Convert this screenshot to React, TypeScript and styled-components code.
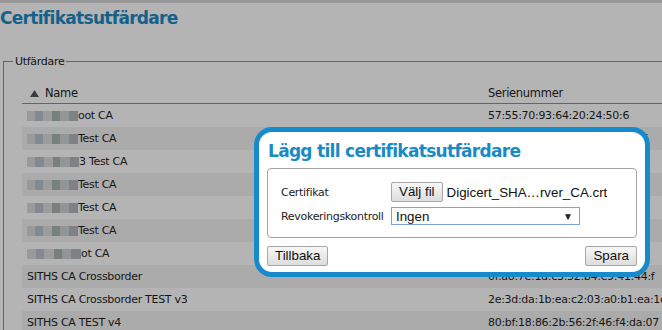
import styled, { createGlobalStyle } from "styled-components";

const GlobalStyle = createGlobalStyle`
  html, body {
    margin: 0;
    padding: 0;
    background: #fff;
  }
  body {
    font-family: "DejaVu Sans", "Liberation Sans", sans-serif;
    color: #1f1f1f;
  }
`;

const tahoma = `"DejaVu Sans", "Liberation Sans", sans-serif`;
const arial = `"Liberation Sans", Arial, sans-serif`;

const S = {
  Page: styled.div`
    position: relative;
    width: 662px;
    height: 330px;
    overflow: hidden;
    background: #fff;
  `,
  TopBar: styled.div`
    height: 3px;
    background: #d8d8d8;
  `,
  Title: styled.h1`
    margin: 0;
    height: 30px;
    line-height: 30px;
    font-family: ${tahoma};
    font-size: 17px;
    font-weight: bold;
    letter-spacing: -0.7px;
    color: #1d8ac5;
  `,
  Fieldset: styled.fieldset`
    margin: 22px -30px 0 3px;
    padding: 0 0 0 18px;
    border: 1px solid #8e8e8e;
    border-right: none;
    border-bottom: none;
    min-width: 0;
  `,
  Legend: styled.legend`
    margin-left: -9px;
    padding: 0 2px;
    font-family: ${tahoma};
    font-size: 11px;
    letter-spacing: -0.3px;
    line-height: 13px;
    color: #222;
  `,
  Table: styled.div`
    margin-top: 14px;
    font-family: ${tahoma};
    font-size: 11px;
    letter-spacing: -0.3px;
    color: #1f1f1f;
  `,
  HeadRow: styled.div`
    display: grid;
    grid-template-columns: 466px 1fr;
    height: 22px;
    align-items: end;
    padding-bottom: 3px;
    box-sizing: border-box;
    border-bottom: 1px solid #8e8e8e;
    font-size: 11.5px;
    line-height: 14px;
  `,
  HeadName: styled.div`
    display: flex;
    align-items: center;
    gap: 6px;
    padding-left: 8px;
  `,
  Row: styled.div<{ $alt: boolean }>`
    display: grid;
    grid-template-columns: 466px 1fr;
    height: 23px;
    align-items: center;
    background: ${(p) => (p.$alt ? "#f3f3f3" : "#fff")};
    white-space: nowrap;
  `,
  NameCell: styled.div`
    display: flex;
    align-items: center;
    padding-left: 5px;
  `,
  Blur: styled.span<{ $w: number }>`
    display: inline-block;
    width: ${(p) => p.$w}px;
    height: 10px;
    background: linear-gradient(
      90deg,
      #d9dbde 0 16%,
      #bac2cc 16% 32%,
      #dedede 32% 50%,
      #abb6b0 50% 64%,
      #cfd3d8 64% 82%,
      #b5b9bd 82%
    );
    filter: blur(0.7px);
  `,
  Overlay: styled.div`
    position: absolute;
    inset: 0;
    background: rgba(0, 0, 0, 0.294);
  `,
  Dialog: styled.div`
    position: absolute;
    left: 254px;
    top: 127px;
    width: 396px;
    height: 150px;
    box-sizing: border-box;
    border: 5px solid #168bcb;
    border-radius: 18px;
    background: #fff;
    padding: 7px 8px 0 8px;
    display: flex;
    flex-direction: column;
  `,
  DialogTitle: styled.h2`
    margin: 0;
    padding-left: 1px;
    line-height: 24px;
    font-family: ${tahoma};
    font-size: 17px;
    font-weight: bold;
    letter-spacing: -0.7px;
    color: #1a8ac6;
  `,
  FormBox: styled.div`
    margin-top: 5px;
    height: 70px;
    box-sizing: border-box;
    border: 1px solid #a3a3a3;
    border-radius: 4px;
    padding: 13px 12px 12px 13px;
    display: grid;
    grid-template-columns: 110px 1fr;
    grid-template-rows: 20px 18px;
    row-gap: 5px;
    align-items: center;
  `,
  Label: styled.div`
    font-family: ${tahoma};
    font-size: 11px;
    letter-spacing: -0.3px;
    color: #222;
  `,
  FileField: styled.div`
    display: flex;
    align-items: center;
    gap: 4px;
    font-family: ${arial};
    font-size: 13.33px;
    color: #111;
  `,
  Button: styled.button`
    height: 20px;
    padding: 0 7px;
    border: 1px solid #a6a6a6;
    border-radius: 2px;
    background: linear-gradient(#f7f7f7, #dddddd);
    font-family: ${arial};
    font-size: 13.33px;
    color: #111;
    line-height: 18px;
  `,
  Select: styled.div`
    width: 189px;
    height: 18px;
    box-sizing: border-box;
    border: 1px solid #7fa3d6;
    padding: 0 6px 0 4px;
    display: flex;
    align-items: center;
    justify-content: space-between;
    font-family: ${arial};
    font-size: 13.33px;
    color: #111;
  `,
  Arrow: styled.span`
    font-size: 10px;
    color: #222;
  `,
  Actions: styled.div`
    margin-top: 8px;
    display: flex;
    justify-content: space-between;
  `,
};

const rows = [
  { blur: 51, name: "oot CA", serial: "57:55:70:93:64:20:24:50:6" },
  { blur: 51, name: "Test CA", serial: "3c:61:9e:0b:72:d4:15:a8:c3:5f" },
  { blur: 52, name: "3 Test CA", serial: "4a:07:b1:2c:8e:91:d6:30:7f:e2" },
  { blur: 51, name: "Test CA", serial: "19:c4:58:e0:a3:6b:2d:f1:04:9a" },
  { blur: 51, name: "Test CA", serial: "6e:2f:83:d7:10:b5:49:ac:e6:13" },
  { blur: 51, name: "Test CA", serial: "d2:8a:14:67:f9:3e:c0:5b:71:08" },
  { blur: 54, name: "ot CA", serial: "a1:5d:e8:32:07:cc:94:6f:b3:2e" },
  { blur: 0, name: "SITHS CA Crossborder", serial: "0f:a8:7e:1d:c3:52:b4:e9:41:44:f" },
  { blur: 0, name: "SITHS CA Crossborder TEST v3", serial: "2e:3d:da:1b:ea:c2:03:a0:b1:ea:1c" },
  { blur: 0, name: "SITHS CA TEST v4", serial: "80:bf:18:86:2b:56:2f:46:f4:da:07" },
];

const SortUp = () => (
  <svg width="9" height="7" viewBox="0 0 9 7">
    <path d="M4.5 0 L9 7 L0 7 Z" fill="#555" />
  </svg>
);

export default function App() {
  return (
    <>
      <GlobalStyle />
      <S.Page>
        <S.TopBar />
        <S.Title>Certifikatsutfärdare</S.Title>
        <S.Fieldset>
          <S.Legend>Utfärdare</S.Legend>
          <S.Table>
            <S.HeadRow>
              <S.HeadName>
                <SortUp />
                Name
              </S.HeadName>
              <div>Serienummer</div>
            </S.HeadRow>
            {rows.map((r, i) => (
              <S.Row key={i} $alt={i % 2 === 1}>
                <S.NameCell>
                  {r.blur > 0 && <S.Blur $w={r.blur} />}
                  {r.name}
                </S.NameCell>
                <div>{r.serial}</div>
              </S.Row>
            ))}
          </S.Table>
        </S.Fieldset>

        <S.Overlay />

        <S.Dialog>
          <S.DialogTitle>Lägg till certifikatsutfärdare</S.DialogTitle>
          <S.FormBox>
            <S.Label>Certifikat</S.Label>
            <S.FileField>
              <S.Button>Välj fil</S.Button>
              <span>Digicert_SHA…rver_CA.crt</span>
            </S.FileField>
            <S.Label>Revokeringskontroll</S.Label>
            <S.Select>
              <span>Ingen</span>
              <S.Arrow>▼</S.Arrow>
            </S.Select>
          </S.FormBox>
          <S.Actions>
            <S.Button>Tillbaka</S.Button>
            <S.Button>Spara</S.Button>
          </S.Actions>
        </S.Dialog>
      </S.Page>
    </>
  );
}
